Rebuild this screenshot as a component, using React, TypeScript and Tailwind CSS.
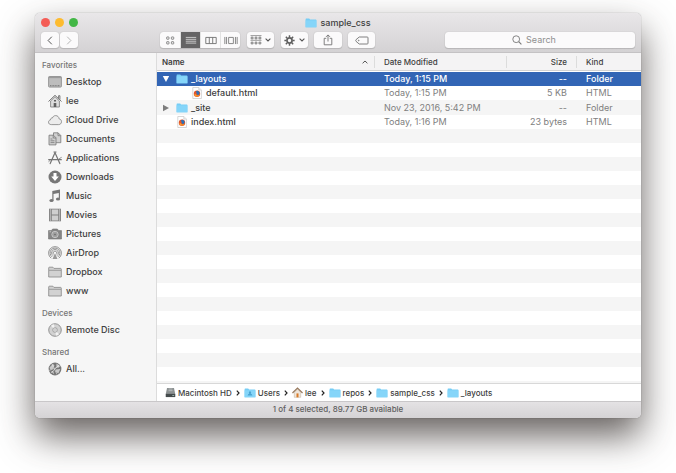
import { useState } from "react";
import type { ReactNode } from "react";

const favorites = [
  "Desktop",
  "lee",
  "iCloud Drive",
  "Documents",
  "Applications",
  "Downloads",
  "Music",
  "Movies",
  "Pictures",
  "AirDrop",
  "Dropbox",
  "www",
];

const files = [
  { name: "_layouts", date: "Today, 1:15 PM", size: "--", kind: "Folder", folder: true, open: true, indent: false },
  { name: "default.html", date: "Today, 1:15 PM", size: "5 KB", kind: "HTML", folder: false, open: false, indent: true },
  { name: "_site", date: "Nov 23, 2016, 5:42 PM", size: "--", kind: "Folder", folder: true, open: false, indent: false },
  { name: "index.html", date: "Today, 1:16 PM", size: "23 bytes", kind: "HTML", folder: false, open: false, indent: false },
];

const path = ["Macintosh HD", "Users", "lee", "repos", "sample_css", "_layouts"];

const folderShape = (
  <>
    <path d="M.7 12V3q0-.8.8-.8h3.400l1 1.200h6.600q.8 0 .8.8V12z" fill="#d2d2d2" stroke="#858585" strokeWidth=".8" />
    <path d="M1 5.300h12" stroke="#858585" strokeWidth=".7" />
  </>
);

// All sidebar glyphs share a 14x14 grid
const sidebarGlyphs: Record<string, ReactNode> = {
  Desktop: (
    <>
      <rect x=".6" y="1.500" width="12.800" height="10.600" rx=".8" fill="#bdbdbd" stroke="#858585" strokeWidth=".8" />
      <path d="M1 2.600h12" stroke="#8d8d8d" strokeWidth=".8" />
      <path d="M2 10.700h10" stroke="#777" strokeWidth="1" strokeDasharray="1 .6" />
    </>
  ),
  lee: (
    <>
      <path d="M2.600 7v6h8.800V7L7 2.700z" fill="#dcdcdc" stroke="#777" strokeWidth=".8" />
      <path d="M.5 7.500 7 1.300l6.500 6.200M10.600 4.600V1.700h1.300v4" fill="none" stroke="#777" strokeWidth="1" />
      <path d="M5.700 9h2.600v4H5.700zM6 6h2v1.600H6z" fill="#606060" />
    </>
  ),
  "iCloud Drive": (
    <path
      d="M3.300 11.600C1.600 11.600.5 10.600.5 9.200c0-1.300.9-2.200 2-2.300C2.400 5.600 3.300 4.800 4.400 5c.5-1.500 1.700-2.400 3.200-2.400 2 0 3.400 1.400 3.500 3.300 1.500.2 2.400 1.300 2.400 2.800 0 1.700-1.200 2.900-2.900 2.900z"
      fill="#ececec"
      stroke="#808080"
      strokeWidth=".8"
    />
  ),
  Documents: (
    <g fill="#d0d0d0" stroke="#777" strokeWidth=".8">
      <path d="M5.500.8h4.600l2.700 2.700v7.200H5.500z" />
      <path d="M10 .9v2.800h2.700" fill="none" />
      <path d="M1 3.200h4.400L8 5.800v7.100H1z" />
      <path d="M5.200 3.300V6h2.700M2.500 7h2M2.500 8.800h4M2.500 10.600h4" fill="none" />
    </g>
  ),
  Applications: (
    <g fill="none" stroke="#747474" strokeLinecap="round">
      <path d="M7.200 1.300 2.200 12.600M6.800 1.300l5 11.300" strokeWidth="1.200" />
      <path d="M.7 8.700h12.600" strokeWidth="1.200" />
      <path d="M5.800 1h2.400M.8 10.500l1.500-1.400M11.500 7.500l1.800-1" strokeWidth=".8" />
    </g>
  ),
  Downloads: (
    <>
      <circle cx="7" cy="7" r="6.500" fill="#777" />
      <path d="M5.500 3h3v3.600h2.300L7 10.900 3.200 6.600h2.300z" fill="#fff" />
    </>
  ),
  Music: (
    <g fill="#777">
      <path d="M4.300 2.100 12 .6v9.100h-1.200V4L5.500 5v6.500H4.300z" />
      <ellipse cx="3.500" cy="11.600" rx="2.100" ry="1.500" />
      <ellipse cx="10" cy="10" rx="2.100" ry="1.500" />
    </g>
  ),
  Movies: (
    <>
      <rect x="1" y=".7" width="12" height="12.600" fill="#818181" />
      <path d="M3.800 1.500h6.400v5H3.800zM3.800 7.500h6.400v5H3.800z" fill="#cfcfcf" />
      <path d="M2.400 1.500v11.400M11.600 1.500v11.400" stroke="#eee" strokeWidth="1" strokeDasharray="1 1" />
    </>
  ),
  Pictures: (
    <>
      <path d="M.5 3.600h3L4.600 2h4.800l1.100 1.600h3V12H.5z" fill="#858585" stroke="#747474" strokeWidth=".6" />
      <circle cx="7" cy="7.500" r="3.200" fill="#999" stroke="#d0d0d0" strokeWidth=".8" />
      <circle cx="7" cy="7.500" r="1.500" fill="#777" stroke="#c0c0c0" strokeWidth=".5" />
      <path d="M1.500 4.800h1.600" stroke="#ddd" strokeWidth=".8" />
    </>
  ),
  AirDrop: (
    <g fill="none" stroke="#777" strokeWidth=".8">
      <path d="M3.200 12.200a6.400 6.400 0 1 1 7.600 0" />
      <path d="M4.100 10.900a4.900 4.900 0 1 1 5.800 0" />
      <path d="M5 9.700a3.400 3.400 0 1 1 4 0" />
      <path d="M5.800 8.500a1.900 1.900 0 1 1 2.400 0" />
      <path d="M7 7.300 4.500 13h5z" fill="#999" stroke="none" />
    </g>
  ),
  Dropbox: folderShape,
  www: folderShape,
  "Remote Disc": (
    <>
      <circle cx="7" cy="7" r="6.300" fill="#d2d2d2" stroke="#808080" strokeWidth=".8" />
      <path d="m7 7-4-4.200A6 6 0 0 1 6 1.200zM7 7l4 4.200a6 6 0 0 1-3 1.600z" fill="#f2f2f2" />
      <circle cx="7" cy="7" r="2.300" fill="#e2e2e2" stroke="#8e8e8e" strokeWidth=".7" />
      <circle cx="7" cy="7" r=".8" fill="#fff" stroke="#999" strokeWidth=".4" />
    </>
  ),
  "All...": (
    <>
      <circle cx="7" cy="7" r="6.400" fill="#777" />
      <path d="M1.500 5.500 5 1.700l1.500 2-2 3.200-2.300.6zM8.500 1.500l3 2-1 2.300-2.200-1zM7.500 7.500l4.800-.6-2 4.600-2.400-1.400zM3 9.500l2.300-.6.8 3.400z" fill="#c9c9c9" />
      <path d="M1 8.500 12.500 4M4 2l5 10.500M3 11 11 3" stroke="#f4f4f4" strokeWidth=".5" />
    </>
  ),
};

function BlueFolder({ user = false }: { user?: boolean }) {
  return (
    <svg viewBox="0 0 12 10" className="h-[10px] w-[12px] shrink-0" aria-hidden="true">
      <path d="M.6 9.300V1.200q0-.6.6-.6h3l.9.800h5.700q.6 0 .6.600v7.300z" fill="#76cdf5" />
      <path d="M.6 2.300h10.800v7H.6z" fill="#85d5f9" />
      {user && <path d="M6 3.300a1.200 1.200 0 0 1 .6 2.200q1.600.4 1.800 2H3.600q.2-1.600 1.800-2A1.200 1.200 0 0 1 6 3.300z" fill="#4aa5d3" />}
    </svg>
  );
}

function HtmlFile() {
  return (
    <svg viewBox="0 0 12 12" className="h-[12px] w-[12px] shrink-0" aria-hidden="true">
      <path d="M1.800.5h6l2.600 2.600v8.400H1.800z" fill="#fff" stroke="#bcbcbc" strokeWidth=".6" />
      <path d="M7.800.5v2.600h2.600" fill="#eee" stroke="#bcbcbc" strokeWidth=".5" />
      <circle cx="6" cy="6.800" r="3.200" fill="#e4562b" />
      <path d="M5 4.200a2.300 2.300 0 0 1 3.300 3c-.8 1.200-2.800.8-2.700-.7z" fill="#2c71b5" />
      <path d="M3.200 7.400c.8 2.700 4.700 3 5.600 0-1.500 1.500-3.500 1.500-4.200-.4z" fill="#f6a02d" />
    </svg>
  );
}

function PathIcon({ name }: { name: string }) {
  if (name === "Macintosh HD") {
    return (
      <svg viewBox="0 0 12 12" className="h-[11px] w-[11px] shrink-0" aria-hidden="true">
        <path d="M2.200 1h7.600l1.400 7H.8z" fill="#8c9192" />
        <path d="M.8 7.500h10.400v3.500H.8z" fill="#454b4c" />
        <path d="M4 2.200h4M3.800 4h4.400" stroke="#c4c8c8" strokeWidth=".8" />
        <path d="M8 9.300h2" stroke="#b9d7ce" strokeWidth=".8" />
      </svg>
    );
  }
  if (name === "lee") {
    return (
      <svg viewBox="0 0 12 12" className="h-[11px] w-[11px] shrink-0" aria-hidden="true">
        <path d="M2.500 6v5.300h7V6L6 2.500z" fill="#eee5da" stroke="#bba991" strokeWidth=".5" />
        <path d="M.5 6.600 6 1.300l5.500 5.300" fill="none" stroke="#96785d" strokeWidth="1.300" />
        <path d="M4.900 7h2.200v4.300H4.900z" fill="#d97a27" />
      </svg>
    );
  }
  return <BlueFolder user={name === "Users"} />;
}

function ToolButton({ label, className, children }: { label: string; className: string; children: ReactNode }) {
  return (
    <button
      type="button"
      aria-label={label}
      className={`flex h-4 items-center justify-center rounded-[3px] bg-[#fbfafb] text-[#737373] shadow-[0_0_1px_rgba(0,0,0,0.25),0_1px_1px_rgba(0,0,0,0.12)] ${className}`}
    >
      {children}
    </button>
  );
}

function Chevron() {
  return (
    <svg viewBox="0 0 6 4" className="h-[4px] w-[6px]" fill="none" aria-hidden="true">
      <path d="m.6.7 2.400 2.300L5.400.7" stroke="#555" strokeWidth="1.100" />
    </svg>
  );
}

const views = [
  {
    label: "Icons",
    width: "w-[21px]",
    glyph: (
      <g fill="none" stroke="currentColor" strokeWidth=".9">
        <rect x="3.500" y="1" width="2.400" height="2.400" rx=".4" />
        <rect x="8.500" y="1" width="2.400" height="2.400" rx=".4" />
        <rect x="3.500" y="6" width="2.400" height="2.400" rx=".4" />
        <rect x="8.500" y="6" width="2.400" height="2.400" rx=".4" />
      </g>
    ),
  },
  {
    label: "List",
    width: "w-[20px]",
    glyph: <path d="M1.500 1.500h11M1.500 3.500h11M1.500 5.500h11M1.500 7.500h11" stroke="currentColor" strokeWidth=".8" />,
  },
  {
    label: "Columns",
    width: "w-[20px]",
    glyph: <path d="M1.500 1.500h11v6.500h-11zM5.200 1.500V8M8.800 1.500V8" fill="none" stroke="currentColor" strokeWidth="1" />,
  },
  {
    label: "Cover Flow",
    width: "w-[19px]",
    glyph: (
      <path d="M4.500 1.500h5V8h-5zM.5 1v7.500M2.300 1v7.500M11.700 1v7.500M13.500 1v7.500" fill="none" stroke="currentColor" strokeWidth=".9" />
    ),
  },
];

function Toolbar() {
  const [view, setView] = useState("List");

  return (
    <header className="rounded-t-[5px] border-b border-[#c4c2c4] bg-linear-to-b from-[#e9e7e9] to-[#d4d2d4] pb-1">
      <div className="grid h-[19px] grid-cols-[1fr_auto_1fr] items-center">
        <div className="flex gap-[5px] pl-[6px]">
          <button type="button" aria-label="Close" className="size-[9px] rounded-full bg-[#f45c56]" />
          <button type="button" aria-label="Minimize" className="size-[9px] rounded-full bg-[#fdbb2f]" />
          <button type="button" aria-label="Zoom" className="size-[9px] rounded-full bg-[#43b746]" />
        </div>
        <h1 className="flex items-center gap-[3px] text-[9px] font-medium text-[#404040]">
          <BlueFolder />
          sample_css
        </h1>
      </div>
      <div className="flex h-4 items-center px-[6px]">
        <div className="mr-[82px] flex shrink-0 gap-px">
          <ToolButton label="Back" className="w-[18px]">
            <svg viewBox="0 0 6 10" className="h-[9px] w-[6px]" fill="none">
              <path d="M5 .8.9 5 5 9.200" stroke="#555" strokeWidth="1.100" />
            </svg>
          </ToolButton>
          <ToolButton label="Forward" className="w-[18px]">
            <svg viewBox="0 0 6 10" className="h-[9px] w-[6px]" fill="none">
              <path d="M1 .8 5.100 5 1 9.200" stroke="#b5b5b5" strokeWidth="1.100" />
            </svg>
          </ToolButton>
        </div>
        <div className="mr-[7px] flex h-4 shrink-0 overflow-hidden rounded-[3px] bg-[#fbfafb] shadow-[0_0_1px_rgba(0,0,0,0.25),0_1px_1px_rgba(0,0,0,0.12)]">
          {views.map((v) => (
            <button
              key={v.label}
              type="button"
              aria-label={v.label}
              aria-pressed={view === v.label}
              onClick={() => setView(v.label)}
              className={`flex items-center justify-center border-r border-[#e2e2e2] last:border-r-0 ${v.width} ${
                view === v.label ? "bg-[#656465] text-[#e6e6e6]" : "text-[#777]"
              }`}
            >
              <svg viewBox="0 0 14 9.500" className="h-[9px] w-[14px]">
                {v.glyph}
              </svg>
            </button>
          ))}
        </div>
        <ToolButton label="Arrange" className="mr-[7px] w-[27px] shrink-0 gap-[3px]">
          <svg viewBox="0 0 12 10" className="h-[10px] w-[12px]" fill="none" stroke="currentColor" strokeWidth=".6">
            <path d="M.5.6h11M.5 5.300h11" strokeWidth=".7" />
            <path d="M1.100 2h2v2h-2zM5 2h2v2H5zM8.900 2h2v2h-2zM1.100 7h2v2h-2zM5 7h2v2H5zM8.900 7h2v2h-2z" fill="#bbb" />
          </svg>
          <Chevron />
        </ToolButton>
        <ToolButton label="Actions" className="mr-[6px] w-[27px] shrink-0 gap-[4px]">
          <svg viewBox="0 0 12 12" className="h-[11px] w-[11px]" fill="none" stroke="#606060">
            <circle cx="6" cy="6" r="2.800" strokeWidth="1.900" />
            <path d="M6 .4v2M6 9.600v2M.4 6h2M9.600 6h2M2 2l1.500 1.500M8.500 8.500 10 10M2 10l1.500-1.500M8.500 3.500 10 2" strokeWidth="1.600" />
          </svg>
          <Chevron />
        </ToolButton>
        <ToolButton label="Share" className="mr-[6px] w-[28px] shrink-0">
          <svg viewBox="0 0 10 12" className="h-[12px] w-[10px]" fill="none" stroke="currentColor" strokeWidth=".9">
            <path d="M3.300 4.300H1.200v6.500h7.600V4.300H6.700M5 7.500V1M3 2.900l2-2 2 2" />
          </svg>
        </ToolButton>
        <ToolButton label="Tags" className="w-[27px] shrink-0">
          <svg viewBox="0 0 14 9" className="h-[9px] w-[14px]" fill="none" stroke="currentColor" strokeWidth=".9">
            <path d="M4.200 1h8q.8 0 .8.8v5.400q0 .8-.8.8h-8L1 5.300q-.6-.8 0-1.600z" />
            <circle cx="3.700" cy="4.500" r=".4" />
          </svg>
        </ToolButton>
        <label className="ml-[70px] flex h-4 flex-1 items-center justify-center gap-[4px] rounded-[3px] bg-[#fbfafb] pr-[12px] shadow-[0_0_1px_rgba(0,0,0,0.25),0_1px_1px_rgba(0,0,0,0.12)]">
          <svg viewBox="0 0 10 10" className="size-[10px]" fill="none" stroke="#777" aria-hidden="true">
            <circle cx="4.200" cy="4.200" r="3.400" strokeWidth=".9" />
            <path d="m6.700 6.700 2.700 2.700" strokeWidth="1.100" />
          </svg>
          <input
            type="search"
            aria-label="Search"
            placeholder="Search"
            className="field-sizing-content text-[9px] text-[#444] outline-none placeholder:text-[#8f8f8f]"
          />
        </label>
      </div>
    </header>
  );
}

function SidebarSection({ title, items }: { title: string; items: string[] }) {
  return (
    <section>
      <h2 className="h-[14px] pl-[7px] text-[8px] leading-[14px] font-medium text-[#757575]">{title}</h2>
      <ul>
        {items.map((item) => (
          <li key={item}>
            <a href="#" className="flex h-[19px] items-center gap-[4px] pl-[13px] text-[9px] font-medium text-[#404040]">
              <svg viewBox="0 0 14 14" className="size-[14px] shrink-0" aria-hidden="true">
                {sidebarGlyphs[item]}
              </svg>
              {item}
            </a>
          </li>
        ))}
      </ul>
    </section>
  );
}

function FileTable() {
  const [selected, setSelected] = useState("_layouts");

  return (
    <table className="w-full table-fixed border-collapse">
      <colgroup>
        <col />
        <col className="w-[132px]" />
        <col className="w-[70px]" />
        <col className="w-[64px]" />
      </colgroup>
      <thead className="text-[8px]">
        <tr className="h-[18px] bg-[#f4f3f4] text-left text-[#404040] shadow-[inset_0_-1px_0_#d2d2d2]">
          <th className="p-0 pl-[5px] font-semibold">
            <div className="flex h-[12px] items-center justify-between border-r border-[#dcdcdc] pr-[6px]">
              Name
              <svg viewBox="0 0 6 4" className="h-[4px] w-[6px]" fill="none" aria-hidden="true">
                <path d="M.6 3.300 3 1l2.400 2.300" stroke="#555" strokeWidth="1" />
              </svg>
            </div>
          </th>
          <th className="p-0 pl-[9px] font-medium">
            <div className="flex h-[12px] items-center border-r border-[#dcdcdc]">Date Modified</div>
          </th>
          <th className="p-0 font-medium">
            <div className="flex h-[12px] items-center justify-end border-r border-[#dcdcdc] pr-[9px]">Size</div>
          </th>
          <th className="p-0 pl-[9px] font-medium">Kind</th>
        </tr>
      </thead>
      <tbody className="text-[9px]">
        {files.map((file, i) => {
          const active = file.name === selected;
          return (
            <tr
              key={file.name}
              aria-selected={active}
              onClick={() => setSelected(file.name)}
              className={`leading-[14px] ${i % 2 ? "h-[14px]" : "h-[15px]"} ${
                active
                  ? "bg-[#3265b5] font-medium text-white shadow-[inset_0_1px_0_#fff]"
                  : i % 2
                    ? "bg-white text-[#808080]"
                    : "bg-[#f5f5f5] text-[#808080]"
              }`}
            >
              <td className="p-0">
                <div className={`flex items-center gap-[3px] ${file.indent ? "pl-[34px]" : file.folder ? "pl-[5px]" : "pl-[19px]"}`}>
                  {file.folder && (
                    <button type="button" aria-label={`Toggle ${file.name}`} className="mr-[3px] flex size-[8px] items-center">
                      <svg viewBox="0 0 8 8" className="size-[8px]">
                        <path d={file.open ? "M.8 1h6.400L4 7z" : "M1 .8v6.400L7 4z"} fill={active ? "#fff" : "#7c7c7c"} />
                      </svg>
                    </button>
                  )}
                  {file.folder ? <BlueFolder /> : <HtmlFile />}
                  <span className={active ? "text-white" : "font-medium text-[#404040]"}>{file.name}</span>
                </div>
              </td>
              <td className="p-0 pl-[9px] whitespace-nowrap">{file.date}</td>
              <td className="p-0 pr-[10px] text-right">{file.size}</td>
              <td className="p-0 pl-[9px]">{file.kind}</td>
            </tr>
          );
        })}
      </tbody>
    </table>
  );
}

export default function App() {
  return (
    <div className="flex min-h-screen cursor-default overflow-hidden bg-white px-[35px] pt-[13px] pb-[55px] font-['Inter','Liberation_Sans',sans-serif]">
      <div className="flex flex-1 flex-col rounded-[5px] bg-white shadow-[0_0_1px_rgba(0,0,0,0.5),0_18px_36px_rgba(45,38,35,0.72)]">
        <Toolbar />
        <div className="flex flex-1">
          <nav className="flex w-[122px] shrink-0 flex-col gap-[6px] border-r border-[#dcdcdc] bg-[#f6f6f6] pt-[5px] pb-[23px]">
            <SidebarSection title="Favorites" items={favorites} />
            <SidebarSection title="Devices" items={["Remote Disc"]} />
            <SidebarSection title="Shared" items={["All..."]} />
          </nav>
          <main className="flex min-w-0 flex-1 flex-col">
            <FileTable />
            <div className="flex-1 bg-[repeating-linear-gradient(to_bottom,#f5f5f5_0,#f5f5f5_14px,#fff_14px,#fff_28px)]" />
            <ol className="flex h-[18px] items-center gap-[4px] border-t border-[#d8d8d8] bg-white pl-[8px] text-[8px] font-medium text-[#404040]">
              {path.map((name, i) => (
                <li key={name} className="flex shrink-0 items-center gap-[4px]">
                  {i > 0 && (
                    <svg viewBox="0 0 4 6" className="h-[6px] w-[4px]" fill="none" aria-hidden="true">
                      <path d="M.8.7 3 3 .8 5.300" stroke="#222" strokeWidth="1.200" />
                    </svg>
                  )}
                  <a href="#" className="flex items-center gap-[2px]">
                    <PathIcon name={name} />
                    {name}
                  </a>
                </li>
              ))}
            </ol>
          </main>
        </div>
        <footer className="h-[17px] rounded-b-[5px] border-t border-[#c9c7c9] bg-linear-to-b from-[#e4e2e4] to-[#d5d3d5] text-center text-[8px] leading-[15px] font-medium text-[#606060]">
          1 of 4 selected, 89.77 GB available
        </footer>
      </div>
    </div>
  );
}
